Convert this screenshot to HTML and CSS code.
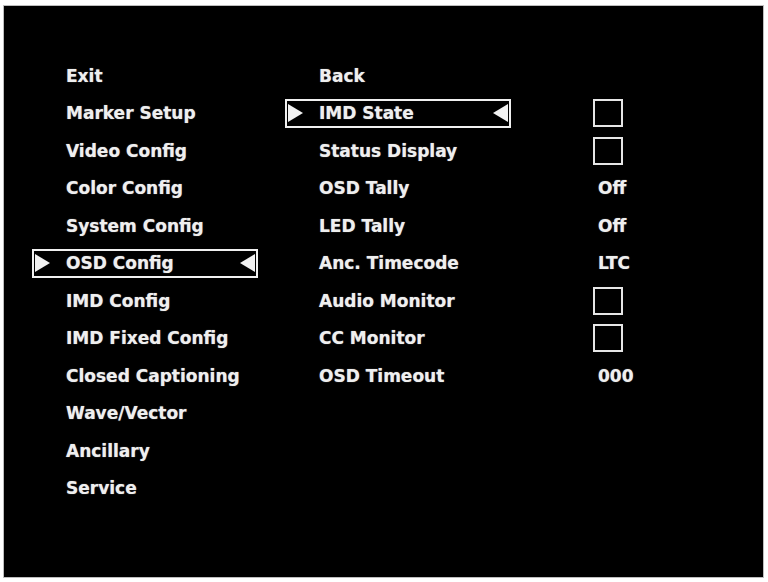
FILE: index.html
```html
<!DOCTYPE html>
<html>
<head>
<meta charset="utf-8">
<link rel="stylesheet" href="styles.css">
</head>
<body>
<div class="screen">
  <div class="menu main">
    <div class="item">Exit</div>
    <div class="item">Marker Setup</div>
    <div class="item">Video Config</div>
    <div class="item">Color Config</div>
    <div class="item">System Config</div>
    <div class="item sel">
      <svg class="tri" viewBox="0 0 15 18"><polygon points="0,0 15,9 0,18" fill="#f2f2f2"/></svg>
      <span class="label">OSD Config</span>
      <svg class="tri" viewBox="0 0 15 18"><polygon points="15,0 0,9 15,18" fill="#f2f2f2"/></svg>
    </div>
    <div class="item">IMD Config</div>
    <div class="item">IMD Fixed Config</div>
    <div class="item">Closed Captioning</div>
    <div class="item">Wave/Vector</div>
    <div class="item">Ancillary</div>
    <div class="item">Service</div>
  </div>
  <div class="menu sub">
    <div class="item">Back</div><div class="val"></div>
    <div class="item sel">
      <svg class="tri" viewBox="0 0 15 18"><polygon points="0,0 15,9 0,18" fill="#f2f2f2"/></svg>
      <span class="label">IMD State</span>
      <svg class="tri" viewBox="0 0 15 18"><polygon points="15,0 0,9 15,18" fill="#f2f2f2"/></svg>
    </div><div class="val"><span class="box"></span></div>
    <div class="item">Status Display</div><div class="val"><span class="box"></span></div>
    <div class="item">OSD Tally</div><div class="val"><span class="txt">Off</span></div>
    <div class="item">LED Tally</div><div class="val"><span class="txt">Off</span></div>
    <div class="item">Anc. Timecode</div><div class="val"><span class="txt">LTC</span></div>
    <div class="item">Audio Monitor</div><div class="val"><span class="box"></span></div>
    <div class="item">CC Monitor</div><div class="val"><span class="box"></span></div>
    <div class="item">OSD Timeout</div><div class="val"><span class="txt">000</span></div>
  </div>
</div>
</body>
</html>
```
FILE: styles.css
```css
html, body {
  margin: 0;
  padding: 0;
  background: #ffffff;
}
body {
  width: 768px;
  height: 582px;
  padding: 6px 5px 5px 4px;
  box-sizing: border-box;
  font-family: "DejaVu Sans", "Liberation Sans", sans-serif;
  font-weight: bold;
  font-size: 17px;
  color: #efefef;
}
.screen {
  width: 759px;
  height: 571px;
  background: #000;
  box-shadow: 0 0 0 1px #bdbdbd;
  box-sizing: border-box;
  padding: 51px 0 0 28px;
  display: flex;
  gap: 27px;
}
.menu {
  display: grid;
  grid-auto-rows: 37.5px;
  align-items: center;
}
.main {
  grid-template-columns: 226px;
}
.sub {
  grid-template-columns: 226px 40px;
  column-gap: 82px;
}
.item {
  height: 29px;
  box-sizing: border-box;
  border: 2px solid transparent;
  padding-left: 32px;
  display: flex;
  align-items: center;
  white-space: nowrap;
  text-shadow: 0 0 1px rgba(255,255,255,0.6);
}
.item.sel {
  border-color: #f0f0f0;
  padding: 0 1px;
}
.tri {
  width: 15px;
  height: 18px;
  flex: none;
}
.label {
  margin-left: 16px;
  flex: 1;
}
.val {
  display: flex;
  align-items: center;
  height: 29px;
}
.txt {
  padding-left: 5px;
  text-shadow: 0 0 1px rgba(255,255,255,0.6);
}
.box {
  width: 30px;
  height: 28px;
  box-sizing: border-box;
  border: 2px solid #e6e6e6;
}
```
